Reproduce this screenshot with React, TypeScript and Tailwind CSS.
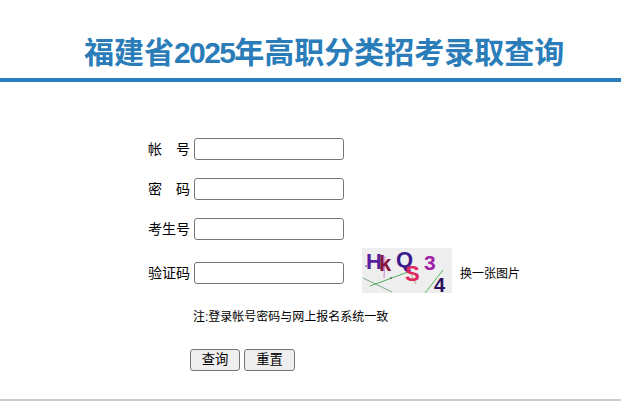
const cjk = "font-['Liberation_Sans','Noto_Sans_CJK_SC',sans-serif]"

const fields = [
  { label: ['帐', '号'], marginTop: 'mt-0' },
  { label: ['密', '码'], marginTop: 'mt-[18px]' },
  { label: ['考生号'], marginTop: 'mt-[18px]' },
]

const FieldRow = ({ label, className }: { label: string[]; className: string }) => (
  <div className={`flex h-[22px] items-center gap-1 ${className}`}>
    <label className="flex w-[42px] justify-between whitespace-nowrap text-[14px] text-black">
      {label.map((part) => (
        <span key={part}>{part}</span>
      ))}
    </label>
    <input
      type="text"
      className="h-[22px] w-[150px] rounded-[3px] border border-[#767676] bg-white"
    />
  </div>
)

const Captcha = () => (
  <svg className="h-[45px] w-[90px] shrink-0" viewBox="0 0 90 45">
    <rect width="90" height="45" fill="#eeeeee" />
    <path d="M1 30 L30 44" stroke="#5a9a70" strokeWidth="0.8" fill="none" />
    <path d="M8 38 L46 24" stroke="#3fa34d" strokeWidth="0.9" fill="none" />
    <path d="M45 18 L54 36" stroke="#8a6a50" strokeWidth="0.6" fill="none" />
    <path d="M63 45 L81 22" stroke="#3fb04d" strokeWidth="0.9" fill="none" />
    <path d="M23 8 L22 30" stroke="#cc66cc" strokeWidth="0.8" fill="none" />
    <circle cx="4" cy="18" r="1" fill="#6a7fd0" />
    <circle cx="29" cy="30" r="0.8" fill="#204030" />
    <text x="4" y="21" fontSize="22" fontWeight="700" fill="#5a1fa0" fontFamily="Liberation Sans">H</text>
    <text x="17" y="23" fontSize="22" fontWeight="700" fill="#8a1040" fontFamily="Liberation Sans">k</text>
    <text x="34" y="19" fontSize="22" fontWeight="700" fill="#3c1a8c" fontFamily="Liberation Sans">Q</text>
    <text x="43" y="33" fontSize="22" fontWeight="700" fill="#e0245e" fontFamily="Liberation Sans">S</text>
    <text x="62" y="22" fontSize="21" fontWeight="700" fill="#a020a8" fontFamily="Liberation Sans">3</text>
    <text x="72" y="44" fontSize="20" fontWeight="700" fill="#2c0f5c" fontFamily="Liberation Sans">4</text>
  </svg>
)

export default function App() {
  return (
    <div className={`h-[405px] w-[621px] overflow-hidden bg-white ${cjk}`}>
      <header className="h-[82px] border-b-[4px] border-[#2a7db9] pl-[84px] pt-[33px]">
        <h1 className="whitespace-nowrap text-[30px] font-bold leading-[40px] text-[#2a7db9]">
          福建省<span className="tracking-[-1.6px]">2025</span>年高职分类招考录取查询
        </h1>
      </header>

      <main className="h-[319px] border-b-2 border-[#cccccc] pl-[148px] pt-[56px]">
        {fields.map((field) => (
          <FieldRow key={field.label[0]} label={field.label} className={field.marginTop} />
        ))}

        <div className="mt-[8px] flex h-[45px] items-start">
          <FieldRow label={['验证码']} className="mt-[14px]" />
          <div className="ml-[18px]">
            <Captcha />
          </div>
          <a className="ml-2 mt-[17px] whitespace-nowrap text-[12px] leading-[18px] text-black">换一张图片</a>
        </div>

        <p className="ml-[45px] mt-[15px] text-[12px] leading-[18px] text-black">
          注:登录帐号密码与网上报名系统一致
        </p>

        <div className="ml-[42px] mt-[23px] flex gap-1">
          <button className="h-[22px] w-[50px] rounded-[3px] border border-[#767676] bg-[#efefef] text-[13.33px] text-black">
            查询
          </button>
          <button className="h-[22px] w-[51px] rounded-[3px] border border-[#767676] bg-[#efefef] text-[13.33px] text-black">
            重置
          </button>
        </div>
      </main>
    </div>
  )
}
